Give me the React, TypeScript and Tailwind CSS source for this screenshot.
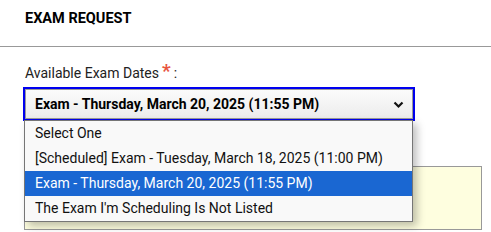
import React from "react";

const options = [
  "Select One",
  "[Scheduled] Exam - Tuesday, March 18, 2025 (11:00 PM)",
  "Exam - Thursday, March 20, 2025 (11:55 PM)",
  "The Exam I'm Scheduling Is Not Listed",
];

const selected = 2;

const App: React.FC = () => {
  return (
    <div className="w-[491px] h-[232px] overflow-hidden bg-white text-[#222] font-['Roboto',sans-serif]">
      {/* header */}
      <div className="h-[47px] border-b border-[#999] px-[25px] pt-[9px]">
        <h2 className="text-[14.5px] leading-[20px] font-bold text-black">EXAM REQUEST</h2>
      </div>

      <div className="pl-[23px] pt-[16px]">
        <label className="flex items-start text-[14px] leading-[20px] text-[#222] pl-[2px]">
          Available Exam Dates
          <span className="ml-[3px] text-[#e8553f] text-[19px] leading-[16px] font-bold">*</span>
          <span className="ml-[3px]">:</span>
        </label>

        <div className="relative mt-[4px] w-[392px]">
          {/* select box */}
          <div className="h-[34px] border-2 border-[#0000ee]">
            <div className="flex h-full items-center justify-between border border-[#999] bg-gradient-to-b from-[#fbfbfb] to-[#ececec] pl-[9px] pr-[8px]">
              <span className="text-[14px] font-bold text-black">{options[selected]}</span>
              <svg width="11" height="8" viewBox="0 0 11 8" className="mt-[1px]">
                <path d="M1.5 1.5 L5.5 5.5 L9.5 1.5" fill="none" stroke="#111" strokeWidth="2.2" />
              </svg>
            </div>
          </div>

          {/* open dropdown list */}
          <ul className="absolute left-[1px] top-[33px] z-10 w-[389px] border border-[#767676] bg-[#f9f9f9] shadow-[4px_4px_8px_rgba(0,0,0,0.25)]">
            {options.map((opt, i) => (
              <li
                key={opt}
                className={
                  i === selected
                    ? "h-[25px] pl-[10px] text-[14px] leading-[25px] bg-[#1a67d2] text-white"
                    : "h-[25px] pl-[10px] text-[14px] leading-[25px] text-[#111]"
                }
              >
                {opt}
              </li>
            ))}
          </ul>
        </div>

        {/* note box behind the list */}
        <div className="mt-[45px] ml-[1px] h-[64px] w-[458px] border border-[#999] bg-[#fefedf]" />
      </div>
    </div>
  );
};

export default App;
